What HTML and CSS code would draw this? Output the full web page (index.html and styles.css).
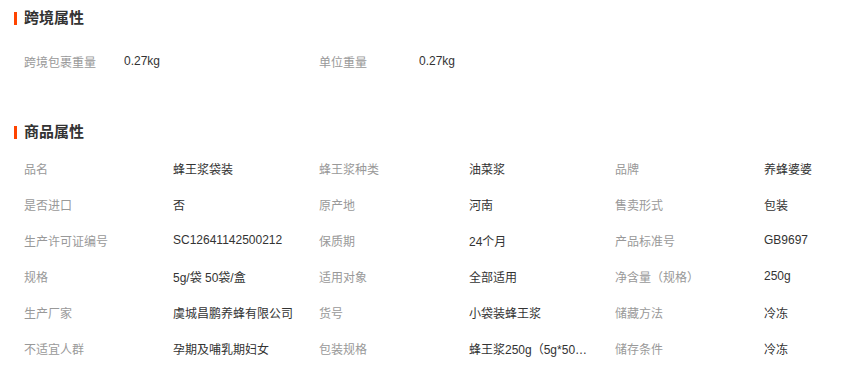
FILE: index.html
```html
<!DOCTYPE html>
<html lang="zh-CN">
<head>
<meta charset="utf-8">
<title>属性</title>
<link rel="stylesheet" href="styles.css">
</head>
<body>
<section class="section">
  <h2 class="title">跨境属性</h2>
  <div class="grid grid-cross">
    <div class="label">跨境包裹重量</div><div class="value">0.27kg</div>
    <div class="label">单位重量</div><div class="value">0.27kg</div>
  </div>
</section>
<section class="section section-goods">
  <h2 class="title">商品属性</h2>
  <div class="grid grid-goods">
    <div class="label">品名</div><div class="value">蜂王浆袋装</div>
    <div class="label">蜂王浆种类</div><div class="value">油菜浆</div>
    <div class="label">品牌</div><div class="value">养蜂婆婆</div>

    <div class="label">是否进口</div><div class="value">否</div>
    <div class="label">原产地</div><div class="value">河南</div>
    <div class="label">售卖形式</div><div class="value">包装</div>

    <div class="label">生产许可证编号</div><div class="value">SC12641142500212</div>
    <div class="label">保质期</div><div class="value">24个月</div>
    <div class="label">产品标准号</div><div class="value">GB9697</div>

    <div class="label">规格</div><div class="value">5g/袋 50袋/盒</div>
    <div class="label">适用对象</div><div class="value">全部适用</div>
    <div class="label">净含量（规格）</div><div class="value">250g</div>

    <div class="label">生产厂家</div><div class="value">虞城昌鹏养蜂有限公司</div>
    <div class="label">货号</div><div class="value">小袋装蜂王浆</div>
    <div class="label">储藏方法</div><div class="value">冷冻</div>

    <div class="label">不适宜人群</div><div class="value">孕期及哺乳期妇女</div>
    <div class="label">包装规格</div><div class="value">蜂王浆250g（5g*50袋/盒）</div>
    <div class="label">储存条件</div><div class="value">冷冻</div>
  </div>
</section>
</body>
</html>
```
FILE: styles.css
```css
html, body {
  margin: 0;
  padding: 0;
  background: #fff;
}
body {
  width: 863px;
  overflow: hidden;
  font-family: "Liberation Sans", "Noto Sans CJK SC", sans-serif;
  font-size: 12px;
  color: #333;
}
.section {
  padding-left: 14px;
}
.section-goods {
  margin-top: 35px;
}
.title {
  margin: 0;
  height: 36px;
  line-height: 36px;
  font-size: 15px;
  font-weight: bold;
  color: #333;
  display: flex;
  align-items: center;
}
.title::before {
  content: "";
  display: block;
  width: 3px;
  height: 13px;
  background: #ff4400;
  margin-right: 7px;
}
.grid {
  display: grid;
  padding-left: 10px;
  grid-auto-rows: 36px;
  align-items: center;
}
.grid-cross {
  margin-top: 7px;
  grid-template-columns: 100px 195px 100px 195px;
}
.grid-goods {
  grid-template-columns: 149px 146px 150px 146px 149px 146px;
}
.label {
  color: #999;
  white-space: nowrap;
}
.value {
  color: #333;
  white-space: nowrap;
  overflow: hidden;
  text-overflow: ellipsis;
  max-width: 120px;
}
```
